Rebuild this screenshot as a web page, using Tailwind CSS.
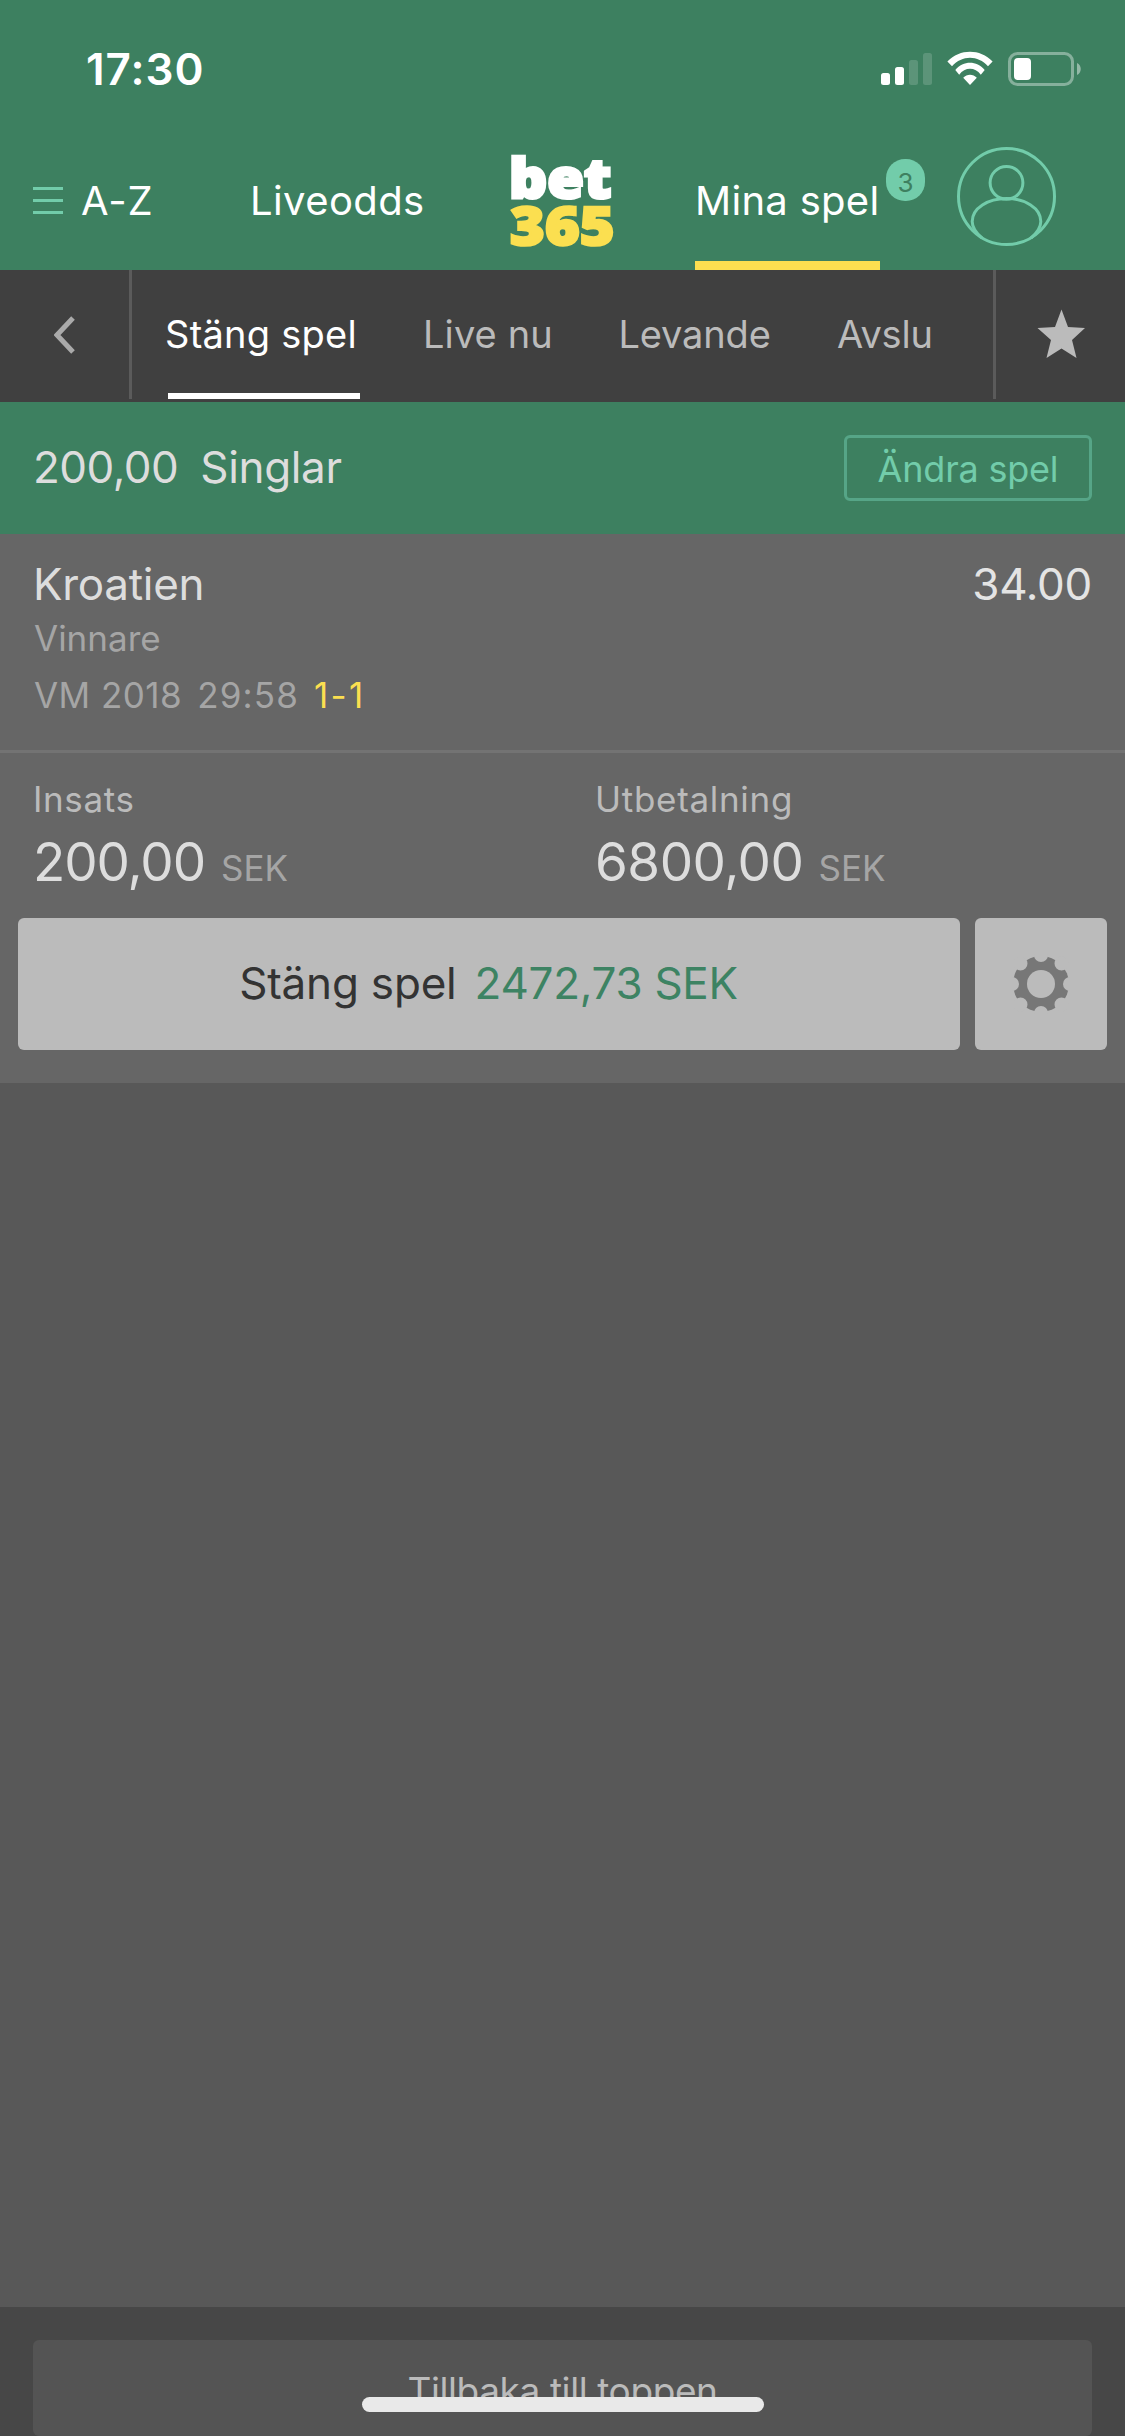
<!DOCTYPE html>
<html lang="sv">
<head>
<meta charset="utf-8">
<title>Mina spel</title>
<script src="https://cdn.jsdelivr.net/npm/@tailwindcss/browser@4"></script>
</head>
<body class="h-[2436px] w-[1125px] overflow-hidden bg-[#585858] font-['Inter',sans-serif] whitespace-nowrap">
<div class="relative flex h-[2436px] flex-col overflow-hidden">

  <header class="bg-[#3d8060] text-white">
    <!-- Status bar -->
    <div class="flex h-[138px] items-center justify-between pr-[44px] pl-[86px]">
      <span class="text-[44px] leading-none font-semibold tracking-[1px]">17:30</span>
      <svg class="h-[38px] w-[200px]" viewBox="0 0 200 38" fill="#fff">
        <rect x="0" y="23" width="9" height="12" rx="2.5"/>
        <rect x="14" y="17" width="9" height="18" rx="2.5"/>
        <g fill-opacity=".16"><rect x="28" y="10" width="9" height="25" rx="2.5"/><rect x="42" y="3" width="9" height="32" rx="2.5"/></g>
        <g transform="translate(66 1)">
          <path d="M.4 10.5C13-2.5 33-2.5 45.6 10.5L41 15.2C31 3.8 15 3.8 5 15.2Z"/>
          <path d="M8.3 19C16.5 9.3 29.5 9.3 37.7 19L33.8 23.7C28 15.8 18 15.8 12.2 23.7Z"/>
          <path d="M16.2 26.8C20 22.7 26 22.7 29.8 26.8L23 34Z"/>
        </g>
        <rect x="128.5" y="3.5" width="63" height="31" rx="8" fill="none" stroke="#fff" stroke-opacity=".38" stroke-width="3"/>
        <rect x="133" y="8" width="17" height="22" rx="4"/>
        <path d="M196 13C201 15 201 23 196 25Z" fill-opacity=".45"/>
      </svg>
    </div>
    <!-- Main navigation -->
    <nav class="grid h-[132px] grid-cols-[250px_257px_188px_262px_1fr] text-[40px] leading-[50px]">
      <div class="flex items-center gap-[18px] pb-[6px] pl-[33px]">
        <svg class="h-[28px] w-[30px]" viewBox="0 0 30 28" fill="#72ccaa"><path d="M0 0H30V3H0ZM0 12H30V15H0ZM0 24H30V27H0Z"/></svg>
        <span class="tracking-[0.9px]">A-Z</span>
      </div>
      <div class="flex items-center pb-[6px] tracking-[0.4px]">Liveodds</div>
      <div class="flex flex-col items-start pt-[16px] pl-[2px] font-['Open_Sans',sans-serif] font-extrabold">
        <span class="origin-left scale-x-[1.08] text-[55px] leading-[45px] [-webkit-text-stroke:3px_#fff]">bet</span>
        <span class="origin-left scale-x-[1.12] pl-[1px] text-[53px] leading-[51px] text-[#fbdf50] [-webkit-text-stroke:2.5px_#fbdf50]">365</span>
      </div>
      <div class="flex gap-[6px]">
        <div class="flex w-[185px] items-center border-b-[9px] border-[#fbdf50] pt-[3px] tracking-[0.3px]">Mina spel</div>
        <div class="mt-[21px] flex h-[42px] w-[39px] items-center justify-center rounded-[19px] bg-[#72ccaa] pt-[6px] text-[26px] text-[#3e8060]">3</div>
      </div>
      <svg class="mt-[9px] h-[99px] w-[99px]" viewBox="0 0 99 99" fill="none" stroke="#72ccaa" stroke-width="3">
        <circle cx="49.5" cy="49.5" r="48"/>
        <circle cx="49.5" cy="35.8" r="16.4"/>
        <path d="M25 91C18 85 15.2 79 15.2 74.5C15.2 61 31 51.5 49.5 51.5S83.8 61 83.8 74.5C83.8 79 81 85 74 91"/>
      </svg>
    </nav>
  </header>

  <!-- Sub navigation -->
  <div class="h-[132px] bg-[#404040]">
    <div class="grid h-[129px] grid-cols-[132px_861px_132px] text-[38px] leading-[48px] text-[#bbb]">
      <div class="flex items-center border-r-[3px] border-[#5b5b5b] pl-[54px]">
        <svg class="h-[38px] w-[21px]" viewBox="0 0 21 38" fill="none" stroke="#aaa" stroke-width="5"><path d="M19 2L3 19L19 36"/></svg>
      </div>
      <div class="grid grid-cols-[258px_195.5px_218.5px_1fr] pl-[33px]">
        <div class="relative flex items-center pb-[2px] tracking-[0.25px] text-white">Stäng spel<span class="absolute bottom-0 left-[3px] h-[6px] w-[192px] bg-white"></span></div>
        <div class="flex items-center pb-[2px] tracking-[0.1px]">Live nu</div>
        <div class="flex items-center pb-[2px] tracking-[-0.15px]">Levande</div>
        <div class="flex items-center pb-[2px] tracking-[-0.2px]">Avslu</div>
      </div>
      <div class="flex items-center border-l-[3px] border-[#5b5b5b] pb-[2px] pl-[41px]">
        <svg class="h-[50px] w-[48px]" viewBox="0 0 48 50" fill="#bbb"><path d="M24.5 .5L31 18L48 19L35 31L39.5 49L24.5 39.5L9.500 49L14 31L.5 19L18 18Z"/></svg>
      </div>
    </div>
  </div>

  <!-- Bet header -->
  <div class="flex h-[132px] items-center bg-[#3d8060] px-[33px] text-[44px] leading-[54px] text-[#ddd]">
    <span class="pb-[2px] tracking-[-0.5px]">200,00</span>
    <span class="ml-[22px] pb-[2px] tracking-[-0.35px]">Singlar</span>
    <div class="ml-auto flex h-[66px] w-[248px] items-center justify-center rounded-[6px] border-[3px] border-[#56a587] pt-[2px] text-[36px] tracking-[-0.2px] text-[#72ccaa]">Ändra spel</div>
  </div>

  <!-- Bet details -->
  <main class="h-[549px] bg-[#666] text-[35px] text-[#a5a5a5]">
    <section class="h-[219px] border-b-[3px] border-[#737373] px-[33px] pt-[20px]">
      <div class="flex justify-between text-[44px] leading-[60px] text-[#ddd]"><span class="tracking-[-0.3px]">Kroatien</span><span class="tracking-[-0.3px] text-[#e4e4e4]">34.00</span></div>
      <div class="-mt-px pl-[1px] leading-[50px]">Vinnare</div>
      <div class="mt-[2px] pl-[1px] leading-[60px]"><span class="tracking-[0.46px]">VM 2018</span><span class="ml-[15px] tracking-[1.15px]">29:58</span><span class="ml-[15px] tracking-[2.3px] text-[#fbdf50]">1-1</span></div>
    </section>
    <section class="grid grid-cols-[562px_1fr] pt-[21px] pl-[33px]">
      <div>
        <div class="leading-[50px] tracking-[0.64px] text-[#bbb]">Insats</div>
        <div class="mt-[6px] flex items-baseline leading-[64px]"><span class="text-[53px] tracking-[-1.1px] text-[#ddd]">200,00</span><span class="ml-[16px]">SEK</span></div>
      </div>
      <div>
        <div class="leading-[50px] tracking-[0.7px] text-[#bbb]">Utbetalning</div>
        <div class="mt-[6px] flex items-baseline leading-[64px]"><span class="text-[53px] tracking-[-0.5px] text-[#ddd]">6800,00</span><span class="ml-[15px]">SEK</span></div>
      </div>
    </section>
    <div class="mt-[18px] flex h-[132px] gap-[15px] px-[18px] text-[44px] leading-[54px]">
      <div class="flex w-[942px] items-center justify-center gap-[18px] rounded-[6px] bg-[#bbb] pr-[1px] pb-[2px] text-[#333]"><span class="tracking-[-0.2px]">Stäng spel</span><span class="tracking-[-0.28px] text-[#3d8363]">2472,73 SEK</span></div>
      <div class="flex w-[132px] items-center justify-center rounded-[6px] bg-[#bbb]">
        <svg class="h-[60px] w-[60px]" viewBox="-30 -30 60 60" fill="#bbb">
          <circle r="28" fill="#777"/>
          <circle r="14"/>
          <circle cx="29" r="7"/><circle cx="-29" r="7"/><circle cy="29" r="7"/><circle cy="-29" r="7"/>
          <g transform="rotate(45)"><circle cx="29" r="7"/><circle cx="-29" r="7"/><circle cy="29" r="7"/><circle cy="-29" r="7"/></g>
        </svg>
      </div>
    </div>
  </main>

  <!-- Footer -->
  <footer class="mt-auto h-[129px] bg-[#474747] px-[33px] pt-[33px]">
    <div class="flex h-[96px] justify-center rounded-[6px] bg-[#545454] pt-[26px] text-[37px] leading-[50px] tracking-[-0.4px] text-[#bbb]">Tillbaka till toppen</div>
  </footer>

  <!-- Home indicator -->
  <div class="absolute top-[2397px] left-[362px] h-[15px] w-[402px] rounded-full bg-[#e9e9e9]"></div>
</div>
</body>
</html>
